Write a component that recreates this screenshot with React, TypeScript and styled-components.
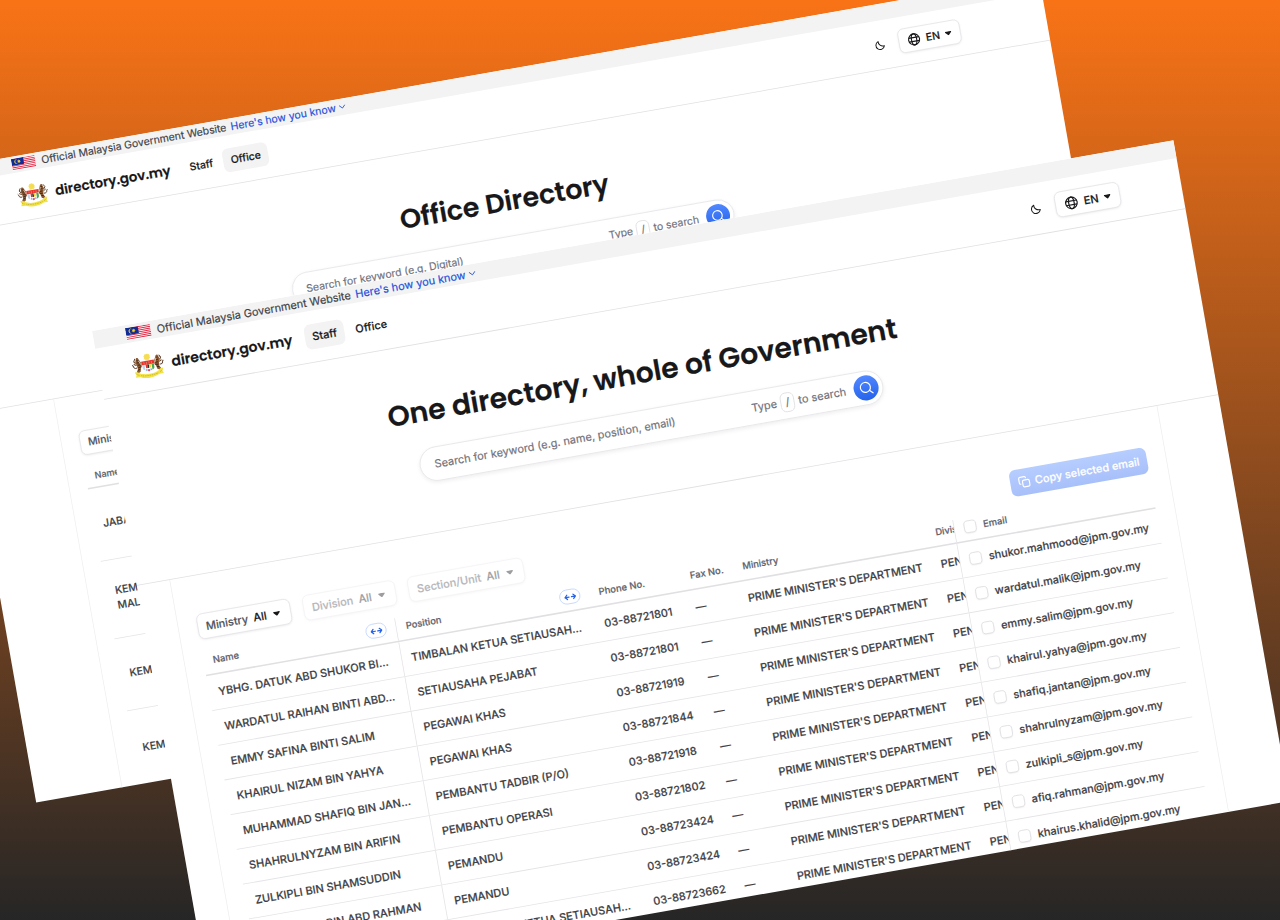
import React from "react";
import styled, { createGlobalStyle, css } from "styled-components";

const Global = createGlobalStyle`
  *, *::before, *::after { box-sizing: border-box; }
  body { margin: 0; overflow: hidden; }
`;

const Stage = styled.main`
  position: relative;
  width: 1280px;
  height: 920px;
  overflow: hidden;
  background: linear-gradient(180deg, #f97316 0%, #262626 100%);
  font-family: Inter, "Liberation Sans", sans-serif;
  font-size: 14px;
  line-height: 20px;
  color: #18181b;
  -webkit-text-stroke: 0.22px currentColor;
`;

/* Browser pages lying tilted on the backdrop */
const Sheet = styled.section<{ $x: number; $y: number; $w: number; $scale: number }>`
  position: absolute;
  left: ${(p) => p.$x}px;
  top: ${(p) => p.$y}px;
  width: ${(p) => p.$w}px;
  height: 856px;
  overflow: hidden;
  display: flex;
  flex-direction: column;
  background: #fff;
  transform-origin: 0 0;
  transform: rotate(-10deg) scale(${(p) => p.$scale});
`;

const Container = styled.div<{ $inset: number }>`
  width: 1280px;
  margin-left: ${(p) => p.$inset}px;
  flex: none;
`;

const Banner = styled.div<{ $h: number }>`
  flex: none;
  height: ${(p) => p.$h}px;
  background: #f3f3f3;
  display: flex;
  align-items: center;
`;

const BannerRow = styled(Container)`
  display: flex;
  align-items: center;
  color: #3f3f46;
`;

const BannerText = styled.span`
  margin-left: 8px;
  white-space: nowrap;
`;

const BannerLink = styled.a`
  margin-left: 6px;
  display: inline-flex;
  align-items: center;
  gap: 4px;
  color: #1d4fdb;
  white-space: nowrap;
`;

const Header = styled.header`
  flex: none;
  height: 66px;
  border-bottom: 1px solid #e0e0e3;
  display: flex;
  align-items: center;
`;

const HeaderRow = styled(Container)`
  display: flex;
  align-items: center;
`;

const SiteName = styled.span`
  width: 155px;
  margin-left: 9px;
  font-family: Poppins, Inter, sans-serif;
  font-weight: 600;
  font-size: 18px;
  line-height: 24px;
  letter-spacing: 0;
  white-space: nowrap;
`;

const Nav = styled.nav`
  display: flex;
  gap: 4px;
  margin-left: 17.5px;
`;

const NavItem = styled.a<{ $active?: boolean }>`
  padding: 6px 10px;
  border-radius: 8px;
  font-weight: 500;
  background: ${(p) => (p.$active ? "#f3f3f3" : "transparent")};
`;

const HeaderTools = styled.div`
  margin-left: auto;
  display: flex;
  align-items: center;
  gap: 18px;
`;

const control = css`
  display: inline-flex;
  align-items: center;
  height: 33px;
  padding: 0 10px;
  border: 1px solid #e4e4e7;
  border-radius: 8px;
  background: #fff;
  box-shadow: 0 1px 3px rgba(0, 0, 0, 0.08);
  font-weight: 500;
  white-space: nowrap;
`;

const LangButton = styled.span`
  ${control}
  gap: 7px;
  padding: 0 11px;
`;

const Hero = styled.div`
  flex: none;
  height: 241px;
  padding-top: 64px;
  border-bottom: 1px solid #e0e0e3;
`;

const HeroInner = styled(Container)`
  display: flex;
  flex-direction: column;
  align-items: center;
  gap: 24px;
`;

const Title = styled.h1`
  margin: 0;
  font-family: Poppins, Inter, sans-serif;
  font-weight: 600;
  font-size: 36px;
  line-height: 44px;
  white-space: nowrap;
`;

const SearchBar = styled.div`
  width: 600px;
  height: 44px;
  border: 1px solid #e4e4e7;
  border-radius: 22px;
  padding: 0 5px 0 18px;
  display: flex;
  align-items: center;
  box-shadow: 0 2px 6px rgba(0, 0, 0, 0.07);
  color: #71717a;
  white-space: nowrap;
`;

const Hint = styled.span`
  margin-left: auto;
  margin-right: 10px;
  display: flex;
  align-items: center;
  gap: 5px;
`;

const Key = styled.kbd`
  width: 18px;
  height: 25px;
  border: 1px solid #dcdce0;
  border-radius: 7px;
  font-family: inherit;
  font-size: 14px;
  display: flex;
  align-items: center;
  justify-content: center;
`;

const SearchButton = styled.span`
  width: 32px;
  height: 32px;
  border-radius: 50%;
  background: linear-gradient(180deg, #5288ff, #2563eb);
  display: flex;
  align-items: center;
  justify-content: center;
`;

const Body = styled(Container)<{ $top: number }>`
  flex: 1;
  border: solid #efeff1;
  border-width: 0 1px;
  padding: ${(p) => p.$top}px 24px 0;
`;

const FilterRow = styled.div`
  display: flex;
  gap: 16px;
  height: 34px;
  align-items: center;
`;

const Filter = styled.span<{ $off?: boolean }>`
  ${control}
  padding-right: 13px;
  opacity: ${(p) => (p.$off ? 0.42 : 1)};
`;

const FilterName = styled.span`
  color: #52525b;
`;

const FilterValue = styled.span`
  margin: 0 9px 0 7px;
`;

const CopyButton = styled.span`
  margin-left: auto;
  display: inline-flex;
  align-items: center;
  gap: 6px;
  height: 34px;
  padding: 0 10px;
  border-radius: 8px;
  background: linear-gradient(180deg, #b6cdff, #a8c0fa);
  color: #fff;
  font-weight: 500;
  white-space: nowrap;
`;

const Table = styled.div`
  margin-top: 15px;
  display: flex;
  flex-direction: column;
`;

const columns = css`
  display: grid;
  grid-template-columns: 249px 250px 118px 68px 250px 37px 258px;
`;

const HeadRow = styled.div`
  ${columns}
  height: 31px;
  border-bottom: 2px solid #e0e0e3;
  font-size: 12px;
  line-height: 16px;
  font-weight: 500;
  color: #61616a;
`;

const Row = styled.div`
  ${columns}
  height: 45px;
  border-bottom: 1px solid #e4e4e7;
  font-weight: 500;
  color: #3f3f46;
`;

const Cell = styled.div<{ $line?: boolean; $first?: boolean; $head?: boolean }>`
  display: flex;
  align-items: center;
  min-width: 0;
  overflow: hidden;
  white-space: nowrap;
  padding: 0 0 ${(p) => (p.$head ? 5 : 0)}px ${(p) => (p.$line || p.$first ? 12 : 13)}px;
  border-left: ${(p) => (p.$line ? "1px solid #e4e4e7" : "0")};
`;

const Check = styled.span`
  width: 16px;
  height: 16px;
  margin-right: 9px;
  flex: none;
  border: 1px solid #dcdce0;
  border-radius: 5px;
  background: #fff;
  box-shadow: 0 1px 2px rgba(0, 0, 0, 0.06);
`;

const ResizeHandle = styled.span<{ $end: number }>`
  margin-left: auto;
  margin-right: ${(p) => p.$end}px;
  width: 27px;
  height: 19px;
  flex: none;
  border: 1px solid #bcd2ff;
  border-radius: 10px;
  display: flex;
  align-items: center;
  justify-content: center;
`;

const OfficeHead = styled.div`
  height: 31px;
  padding: 6px 12px 0;
  border-bottom: 2px solid #e0e0e3;
  font-size: 12px;
  line-height: 16px;
  font-weight: 500;
  color: #61616a;
`;

const OfficeRow = styled.div<{ $h: number }>`
  height: ${(p) => p.$h}px;
  padding: 0 12px 2px;
  border-bottom: 1px solid #e4e4e7;
  display: flex;
  align-items: center;
  font-weight: 500;
  color: #3f3f46;
  white-space: pre-line;
`;

const Icon = styled.svg`
  flex: none;
`;

const Flag = () => (
  <Icon width="32" height="16" viewBox="0 0 32 16">
    <rect width="32" height="16" fill="#fff" />
    {[0, 1, 2, 3, 4, 5, 6].map((i) => (
      <rect key={i} y={(i * 32) / 14} width="32" height={16 / 14} fill="#dc2440" />
    ))}
    <rect width="16.5" height="9.2" fill="#0f2c96" />
    <path d="M8.2 1.600a3.200 3.200 0 1 0 0 6 2.800 2.800 0 1 1 0-6z" fill="#ffd21f" />
    <path d="m10.200 1.900.6 1.600 1.600-.5-.9 1.500 1.400 1-1.700.1.100 1.700-1.100-1.300-1.100 1.300.1-1.700-1.700-.1 1.400-1-.9-1.500 1.600.5z" fill="#ffd21f" />
  </Icon>
);

const Tiger = () => (
  <g>
    <path d="M7 4.200c1.600-.8 2.600.2 3.200 1.800l2.200 4.400.4 5.100-1.600 2-1 4.500-3 1.400-2.200-1.200 2.200-4-.6-4.800-1.300-3.800z" fill="#8a5730" />
    <path d="M7.300 7l2.800.8M7.300 10l4 .5M8 13.200l4 .2M8 16.400l3.600-.4M7.200 19.500l3-.6" stroke="#2b1a10" strokeWidth="0.900" />
    <path d="M5.600 4.600 3.600 8l1.800 2.800M6.300 16.500c-2.700.6-4.200-.8-4.400-3.200L.9 12M6.300 13.200l-3.300-1.800" fill="none" stroke="#5b3820" strokeWidth="1.200" />
    <path d="M9.600 7.500l2.500 6" stroke="#f6e8d6" strokeWidth="0.900" />
  </g>
);

const Crest = () => (
  <Icon width="42" height="32" viewBox="0 0 42 32">
    <circle cx="21" cy="4.600" r="3.800" fill="#f8e25a" />
    <path d="m21 .2.9 2 2-1-.6 2.100 2.300.2-1.800 1.500 1.600 1.600-2.300.1.300 2.200-2.400-1.600-2.400 1.600.3-2.200-2.300-.1 1.600-1.600-1.800-1.500 2.300-.2-.6-2.100 2 1z" fill="#f5dc55" />
    <path d="M16 6.400a5.500 4 0 0 0 10 0 6 4.600 0 0 1-10 0z" fill="#e3c23c" />
    <Tiger />
    <g transform="translate(42 0) scale(-1 1)">
      <Tiger />
    </g>
    <path d="M13.500 10h15v8.800c0 3.600-4 5.600-7.500 6.800-3.500-1.200-7.500-3.200-7.500-6.800z" fill="#fff" />
    <path d="M12.800 9.600h16.400v4.600H12.800z" fill="#e8332c" />
    <path d="M16.200 10.800v2.600M19.400 10.800v2.600M22.600 10.800v2.600M25.800 10.800v2.600" stroke="#f3b79a" strokeWidth="0.600" />
    <path d="M13.500 14.200h3v7.400c-2-.9-3-1.800-3-3.400z" fill="#c3d6e8" />
    <path d="M25.500 14.200h3v4.400c0 1.500-1 2.500-3 3.300z" fill="#4aa650" />
    <path d="M17.800 14.200h2.200v4.600h-2.200z" fill="#e8332c" />
    <path d="M20 14.200h2v4.600h-2z" fill="#2a2a2a" />
    <path d="M22 14.200h2.400v4.600H22z" fill="#f3d431" />
    <circle cx="21" cy="21.800" r="1.500" fill="#e2506a" />
    <path d="M17.400 20h1.800v2.200h-1.800zM23 20h1.800v2.200H23z" fill="#6fb2e0" />
    <path d="M2.500 21.800c2.400-.4 4.800.2 6 2 3 1.800 8 2.800 12.500 2.800s9.500-1 12.500-2.800c1.200-1.800 3.600-2.400 6-2l-1.700 3.400 1.300 3.400-5.800.2c-3.200 1.800-7.800 2.800-12.300 2.800s-9.100-1-12.300-2.800l-5.800-.2 1.300-3.400z" fill="#f2e245" />
    <path d="M10 27c3.500 2 18.500 2 22 0M4.500 24.500l3.500 2M37.500 24.500l-3.500 2" fill="none" stroke="#a39322" strokeWidth="0.700" strokeDasharray="1.300 1" />
  </Icon>
);

const Chevron = () => (
  <Icon width="9" height="6" viewBox="0 0 10 6" fill="none" stroke="currentColor" strokeWidth="1.200" strokeLinecap="round" strokeLinejoin="round">
    <path d="M1 .9 5 4.900 9 .9" />
  </Icon>
);

const Caret = () => (
  <Icon width="9" height="6" viewBox="0 0 9 6" fill="currentColor">
    <path d="M1 .4h7c.7 0 1 .8.5 1.300L5.200 5.200c-.4.400-1 .4-1.400 0L.5 1.700C0 1.200.3.400 1 .400z" />
  </Icon>
);

const Moon = () => (
  <Icon width="14" height="14" viewBox="0 0 16 16" fill="none" stroke="#18181b" strokeWidth="1.500" strokeLinejoin="round">
    <path d="M5.700 1.800c-.5 4.600 3.300 8.500 8.500 7.900a6.500 6.500 0 1 1-8.500-7.900z" />
  </Icon>
);

const Globe = () => (
  <Icon width="18" height="18" viewBox="0 0 18 18" fill="none" stroke="#18181b" strokeWidth="1.500">
    <circle cx="9" cy="9" r="7.400" />
    <ellipse cx="9" cy="9" rx="3.500" ry="7.400" />
    <path d="M2.200 6.500h13.600M2.200 11.500h13.600" />
  </Icon>
);

const Magnifier = () => (
  <Icon width="18" height="18" viewBox="0 0 18 18" fill="none" stroke="#fff" strokeWidth="1.500" strokeLinecap="round">
    <circle cx="8.200" cy="8.200" r="6.400" />
    <path d="m13 13 3.700 3.700" />
  </Icon>
);

const CopyIcon = () => (
  <Icon width="16" height="16" viewBox="0 0 16 16" fill="none" stroke="#fff" strokeWidth="1.500" strokeLinecap="round" strokeLinejoin="round">
    <rect x="5.700" y="5.700" width="8.800" height="8.800" rx="2" />
    <path d="M3.200 10.300c-1 0-1.700-.8-1.700-1.700V3.300c0-1 .8-1.800 1.800-1.800h5.300c1 0 1.700.7 1.700 1.700" />
  </Icon>
);

const Arrows = () => (
  <Icon width="16" height="10" viewBox="0 0 16 10" fill="none" stroke="#2563eb" strokeWidth="1.600" strokeLinecap="round" strokeLinejoin="round">
    <path d="M4 2.200 1.200 5 4 7.800M1.200 5h5.200M12 2.200 14.800 5 12 7.800M14.800 5H9.600" />
  </Icon>
);

const Resize = ({ end }: { end: number }) => (
  <ResizeHandle $end={end}>
    <Arrows />
  </ResizeHandle>
);

type Entry = [string, string, string, string];
const STAFF: Entry[] = [
  ["YBHG. DATUK ABD SHUKOR BI...", "TIMBALAN KETUA SETIAUSAH...", "03-88721801", "shukor.mahmood@jpm.gov.my"],
  ["WARDATUL RAIHAN BINTI ABD...", "SETIAUSAHA PEJABAT", "03-88721801", "wardatul.malik@jpm.gov.my"],
  ["EMMY SAFINA BINTI SALIM", "PEGAWAI KHAS", "03-88721919", "emmy.salim@jpm.gov.my"],
  ["KHAIRUL NIZAM BIN YAHYA", "PEGAWAI KHAS", "03-88721844", "khairul.yahya@jpm.gov.my"],
  ["MUHAMMAD SHAFIQ BIN JAN...", "PEMBANTU TADBIR (P/O)", "03-88721918", "shafiq.jantan@jpm.gov.my"],
  ["SHAHRULNYZAM BIN ARIFIN", "PEMBANTU OPERASI", "03-88721802", "shahrulnyzam@jpm.gov.my"],
  ["ZULKIPLI BIN SHAMSUDDIN", "PEMANDU", "03-88723424", "zulkipli_s@jpm.gov.my"],
  ["MOHD AFIQ BIN ABD RAHMAN", "PEMANDU", "03-88723424", "afiq.rahman@jpm.gov.my"],
  ["KHAIRUS BIN KHALID", "TIMBALAN KETUA SETIAUSAH...", "03-88723662", "khairus.khalid@jpm.gov.my"],
];

const OFFICES = [
  { name: "JABATAN", height: 98 },
  { name: "KEMENTERIAN\nMALAYSIA", height: 105 },
  { name: "KEMENTERIAN", height: 98 },
  { name: "KEMENTERIAN", height: 104 },
];

type FilterProps = { name: string; off?: boolean };
const FilterSelect = ({ name, off }: FilterProps) => (
  <Filter $off={off}>
    <FilterName>{name}</FilterName>
    <FilterValue>All</FilterValue>
    <Caret />
  </Filter>
);

type PageProps = {
  active: "Staff" | "Office";
  inset: number;
  bannerHeight: number;
  bodyTop: number;
  title: string;
  placeholder: string;
  children: React.ReactNode;
};

const PageContent = ({ active, inset, bannerHeight, bodyTop, title, placeholder, children }: PageProps) => (
  <>
    <Banner $h={bannerHeight}>
      <BannerRow $inset={inset}>
        <Flag />
        <BannerText>Official Malaysia Government Website</BannerText>
        <BannerLink>
          Here's how you know
          <Chevron />
        </BannerLink>
      </BannerRow>
    </Banner>
    <Header>
      <HeaderRow $inset={inset}>
        <Crest />
        <SiteName>directory.gov.my</SiteName>
        <Nav>
          <NavItem $active={active === "Staff"}>Staff</NavItem>
          <NavItem $active={active === "Office"}>Office</NavItem>
        </Nav>
        <HeaderTools>
          <Moon />
          <LangButton>
            <Globe />
            EN
            <Caret />
          </LangButton>
        </HeaderTools>
      </HeaderRow>
    </Header>
    <Hero>
      <HeroInner $inset={inset}>
        <Title>{title}</Title>
        <SearchBar>
          {placeholder}
          <Hint>
            Type <Key>/</Key> to search
          </Hint>
          <SearchButton>
            <Magnifier />
          </SearchButton>
        </SearchBar>
      </HeroInner>
    </Hero>
    <Body $inset={inset} $top={bodyTop}>
      {children}
    </Body>
  </>
);

export default function App() {
  return (
    <>
      <Global />
      <Stage>
        <Sheet $x={-75} $y={172.2} $w={1512} $scale={0.748}>
          <PageContent
            active="Office"
            inset={116}
            bannerHeight={22}
            bodyTop={47}
            title="Office Directory"
            placeholder="Search for keyword (e.g. Digital)"
          >
            <FilterRow>
              <FilterSelect name="Ministry" />
            </FilterRow>
            <Table>
              <OfficeHead>Name</OfficeHead>
              {OFFICES.map((o, i) => (
                <OfficeRow key={i} $h={o.height}>
                  {o.name}
                </OfficeRow>
              ))}
            </Table>
          </PageContent>
        </Sheet>
        <Sheet $x={92.1} $y={331.1} $w={1401} $scale={0.7838}>
          <PageContent
            active="Staff"
            inset={42}
            bannerHeight={23}
            bodyTop={48.5}
            title="One directory, whole of Government"
            placeholder="Search for keyword (e.g. name, position, email)"
          >
            <FilterRow>
              <FilterSelect name="Ministry" />
              <FilterSelect name="Division" off />
              <FilterSelect name="Section/Unit" off />
              <CopyButton>
                <CopyIcon />
                Copy selected email
              </CopyButton>
            </FilterRow>
            <Table>
              <HeadRow>
                <Cell $head $first>
                  Name
                  <Resize end={12} />
                </Cell>
                <Cell $head $line>
                  Position
                  <Resize end={11} />
                </Cell>
                <Cell $head>Phone No.</Cell>
                <Cell $head>Fax No.</Cell>
                <Cell $head>Ministry</Cell>
                <Cell $head>Division</Cell>
                <Cell $head $line>
                  <Check />
                  Email
                </Cell>
              </HeadRow>
              {STAFF.map(([name, position, phone, email]) => (
                <Row key={email}>
                  <Cell $first>{name}</Cell>
                  <Cell $line>{position}</Cell>
                  <Cell>{phone}</Cell>
                  <Cell>—</Cell>
                  <Cell>PRIME MINISTER'S DEPARTMENT</Cell>
                  <Cell>PENGURUSAN</Cell>
                  <Cell $line>
                    <Check />
                    {email}
                  </Cell>
                </Row>
              ))}
            </Table>
          </PageContent>
        </Sheet>
      </Stage>
    </>
  );
}
